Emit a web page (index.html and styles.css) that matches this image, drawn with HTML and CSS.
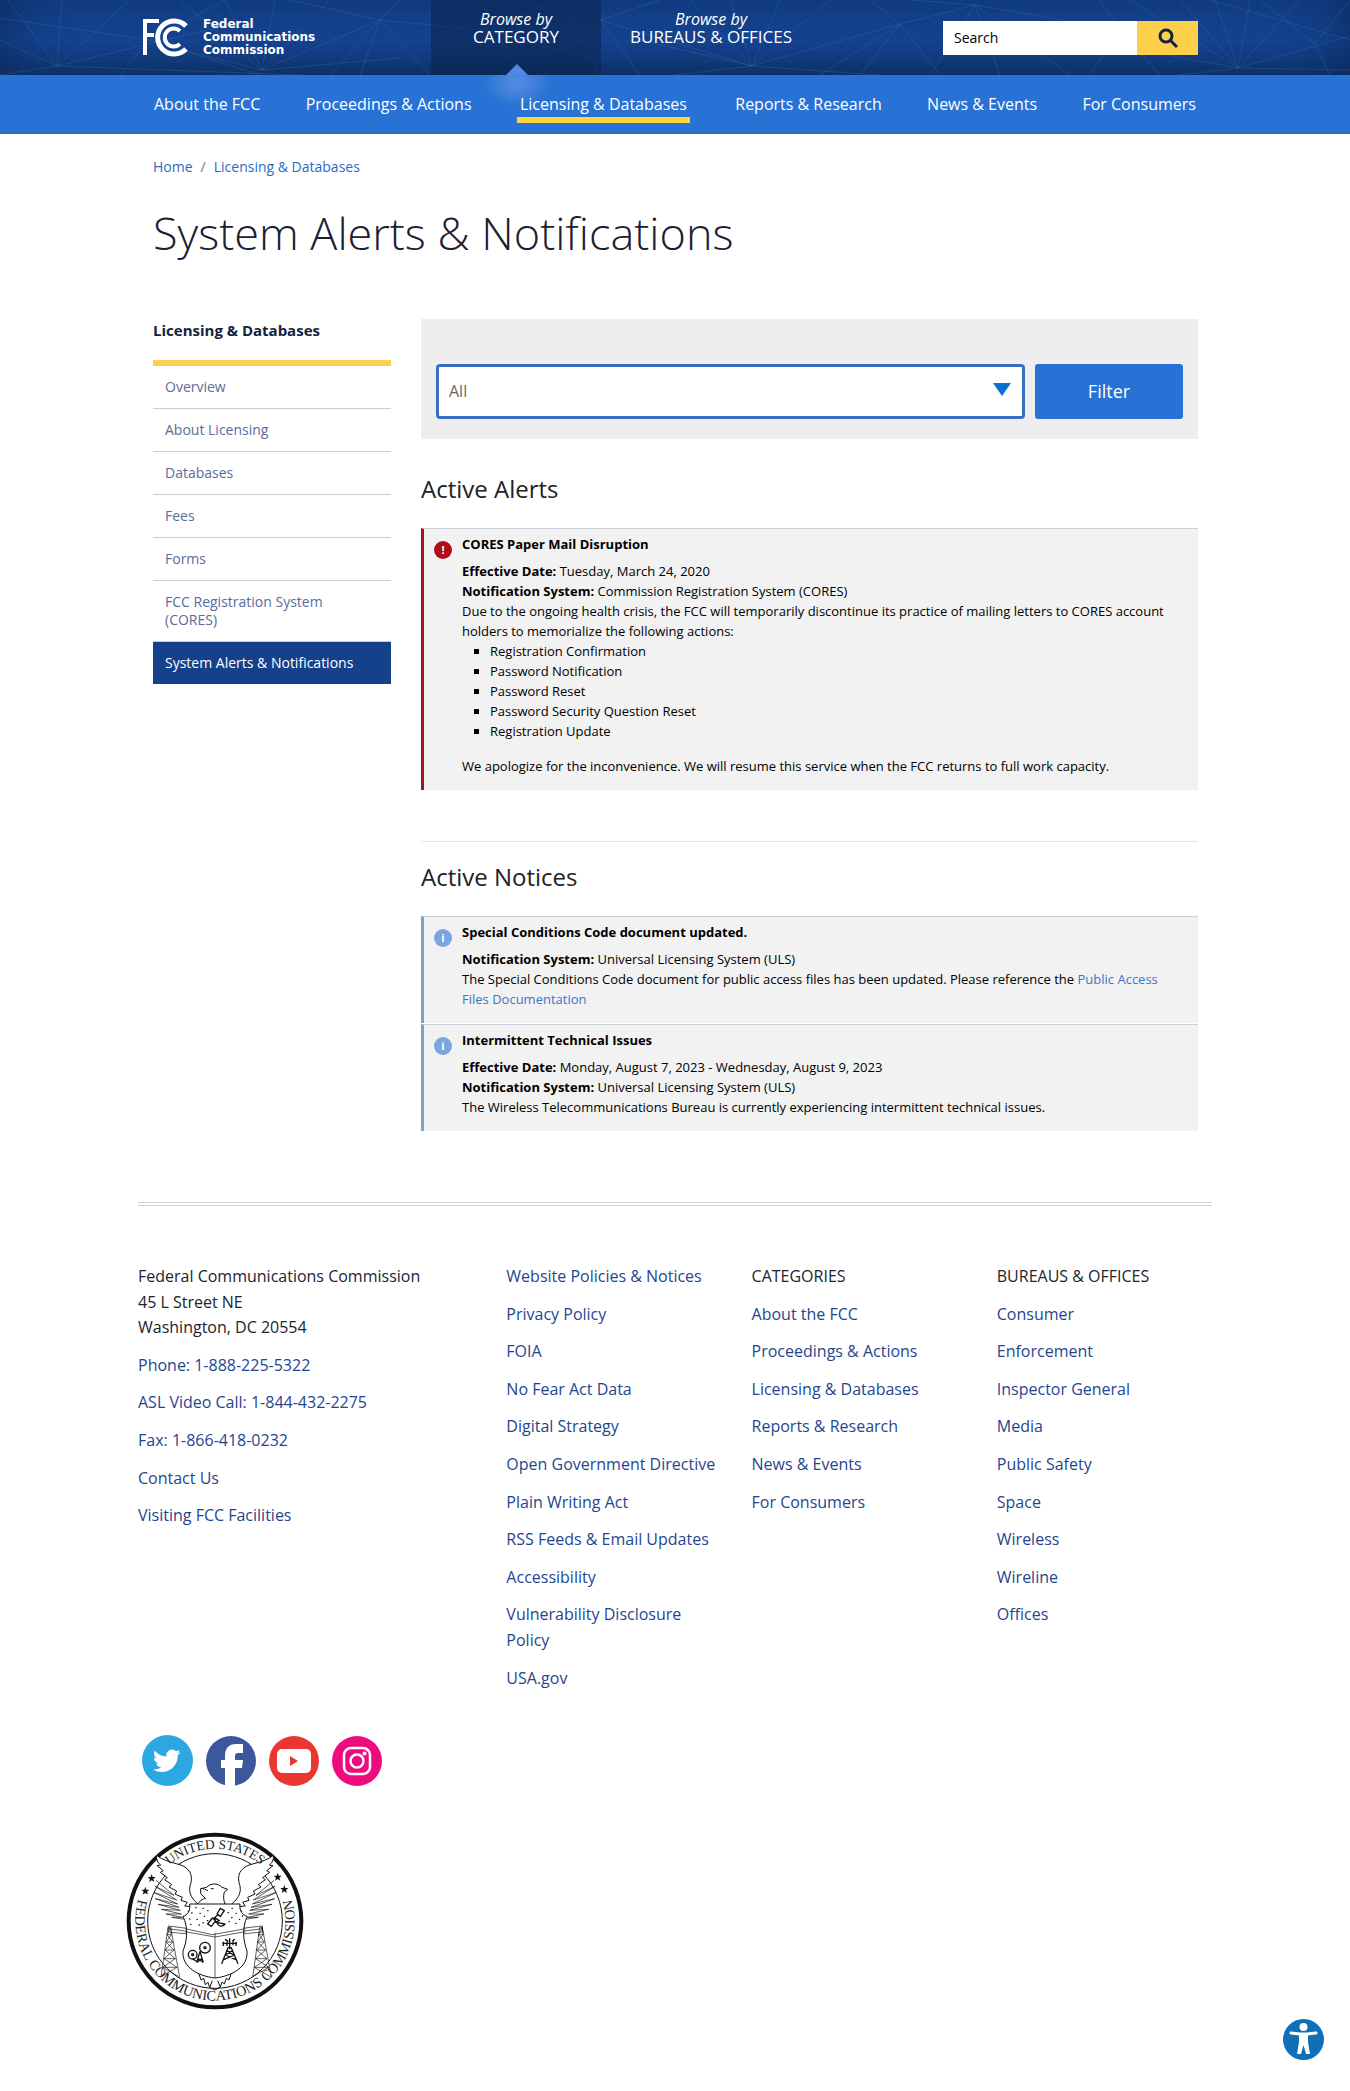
FILE: index.html
```html
<!DOCTYPE html>
<html lang="en">
<head>
<meta charset="utf-8">
<meta name="viewport" content="width=device-width, initial-scale=1">
<title>System Alerts &amp; Notifications | Federal Communications Commission</title>
<link rel="stylesheet" href="styles.css">
</head>
<body>
<header class="masthead">
  <svg class="rays" viewBox="0 0 1350 75" preserveAspectRatio="xMidYMid slice" aria-hidden="true">
    <g fill="none" stroke="#5c8fc8" stroke-opacity=".2" stroke-width="1">
      <path d="M57 66L0 40M57 66L8 0M57 66L62 0M57 66L130 0M57 66L240 22M57 66L300 75M57 66L0 75M0 18L150 40L225 0M150 40L120 75M150 40L260 75M262 70L180 0M262 70L225 0M262 70L275 0M262 70L330 0M262 70L380 20M262 70L190 52M262 70L400 58M380 20L330 75M380 20L360 75M380 20L430 75M380 20L480 30M380 20L400 0M380 20L290 0"/>
      <path d="M480 0L520 75M480 30L560 0M480 30L600 60M560 0L600 75M600 20L640 75M600 20L660 0M600 20L752 66"/>
      <path d="M752 66L690 0M752 66L730 0M752 66L780 0M752 66L830 0M752 66L900 24M752 66L880 75M752 66L640 40M752 66L675 75M900 24L820 75M900 24L860 75M900 24L940 75M900 24L975 5M900 24L870 0M975 5L930 75M975 5L1000 75M975 5L1070 75M975 5L1120 30M975 5L910 0"/>
      <path d="M1238 68L1130 0M1238 68L1180 0M1238 68L1215 0M1238 68L1250 0M1238 68L1300 0M1238 68L1350 36M1238 68L1350 70M1238 68L1140 50M1238 68L1180 75M1315 44L1260 0M1315 44L1350 0M1315 44L1330 75M1210 0L1350 40M1120 30L1090 75M1120 30L1160 75M1120 30L1100 0"/>
    </g>
  </svg>
  <div class="container masthead-row">
    <a class="logo" href="#">
      <svg width="46" height="39" viewBox="0 0 46 39" aria-hidden="true">
        <g fill="none" stroke="#fff" stroke-width="4">
          <path d="M2 37V3H16M2 17H11"/>
          <path stroke-width="5" d="M43 8A16.500 16.500 0 1 0 43 31"/>
          <path d="M37 13A9 9 0 1 0 37 26"/>
        </g>
      </svg>
      <span class="logo-text">Federal<br>Communications<br>Commission</span>
    </a>
    <nav class="browse" aria-label="Browse">
      <a class="browse-tab browse-tab-active" href="#"><em>Browse by</em><span>CATEGORY</span></a>
      <a class="browse-tab browse-tab-wide" href="#"><em>Browse by</em><span>BUREAUS &amp; OFFICES</span></a>
    </nav>
    <form class="search">
      <input type="search" class="search-input" placeholder="Search" aria-label="Search">
      <button type="button" class="search-button" aria-label="Submit search">
        <svg width="20" height="20" viewBox="0 0 20 20" fill="none" stroke="#14233c" stroke-width="3" aria-hidden="true"><circle cx="8" cy="8" r="6"/><path d="M12 12L19 19"/></svg>
      </button>
    </form>
  </div>
</header>
<nav class="mainnav" aria-label="Main">
  <ul class="container mainnav-list">
    <li><a href="#">About the FCC</a></li>
    <li><a href="#">Proceedings &amp; Actions</a></li>
    <li class="current"><a href="#">Licensing &amp; Databases</a></li>
    <li><a href="#">Reports &amp; Research</a></li>
    <li><a href="#">News &amp; Events</a></li>
    <li><a href="#">For Consumers</a></li>
  </ul>
</nav>
<main class="container page">
  <nav class="breadcrumb" aria-label="Breadcrumb"><a href="#">Home</a><span>/</span><a href="#">Licensing &amp; Databases</a></nav>
  <h1>System Alerts &amp; Notifications</h1>
  <div class="columns">
    <aside class="sidebar">
      <h2 class="sidebar-title">Licensing &amp; Databases</h2>
      <ul class="sidebar-list">
        <li><a href="#">Overview</a></li>
        <li><a href="#">About Licensing</a></li>
        <li><a href="#">Databases</a></li>
        <li><a href="#">Fees</a></li>
        <li><a href="#">Forms</a></li>
        <li><a href="#">FCC Registration System (CORES)</a></li>
        <li><a class="selected" href="#">System Alerts &amp; Notifications</a></li>
      </ul>
    </aside>
    <div class="content">
      <form class="filter">
        <div class="filter-select">
          <select aria-label="Notification system"><option>All</option></select>
        </div>
        <button type="button" class="filter-button">Filter</button>
      </form>
      <section>
        <h2 class="section-title">Active Alerts</h2>
        <article class="notice notice-alert">
          <span class="notice-icon">!</span>
          <div>
            <h3>CORES Paper Mail Disruption</h3>
            <p><b>Effective Date:</b> Tuesday, March 24, 2020</p>
            <p><b>Notification System:</b> Commission Registration System (CORES)</p>
            <p>Due to the ongoing health crisis, the FCC will temporarily discontinue its practice of mailing letters to CORES account holders to memorialize the following actions:</p>
            <ul>
              <li>Registration Confirmation</li>
              <li>Password Notification</li>
              <li>Password Reset</li>
              <li>Password Security Question Reset</li>
              <li>Registration Update</li>
            </ul>
            <p>We apologize for the inconvenience. We will resume this service when the FCC returns to full work capacity.</p>
          </div>
        </article>
      </section>
      <hr>
      <section class="notices">
        <h2 class="section-title">Active Notices</h2>
        <article class="notice">
          <span class="notice-icon">i</span>
          <div>
            <h3>Special Conditions Code document updated.</h3>
            <p><b>Notification System:</b> Universal Licensing System (ULS)</p>
            <p>The Special Conditions Code document for public access files has been updated. Please reference the <a href="#">Public Access Files Documentation</a></p>
          </div>
        </article>
        <article class="notice">
          <span class="notice-icon">i</span>
          <div>
            <h3>Intermittent Technical Issues</h3>
            <p><b>Effective Date:</b> Monday, August 7, 2023 - Wednesday, August 9, 2023</p>
            <p><b>Notification System:</b> Universal Licensing System (ULS)</p>
            <p>The Wireless Telecommunications Bureau is currently experiencing intermittent technical issues.</p>
          </div>
        </article>
      </section>
    </div>
  </div>
</main>
<footer class="container footer">
  <div class="footer-grid">
    <ul>
      <li>Federal Communications Commission<br>45 L Street NE<br>Washington, DC 20554</li>
      <li><a href="#">Phone: 1-888-225-5322</a></li>
      <li><a href="#">ASL Video Call: 1-844-432-2275</a></li>
      <li><a href="#">Fax: 1-866-418-0232</a></li>
      <li><a href="#">Contact Us</a></li>
      <li><a href="#">Visiting FCC Facilities</a></li>
    </ul>
    <ul>
      <li><a href="#">Website Policies &amp; Notices</a></li>
      <li><a href="#">Privacy Policy</a></li>
      <li><a href="#">FOIA</a></li>
      <li><a href="#">No Fear Act Data</a></li>
      <li><a href="#">Digital Strategy</a></li>
      <li><a href="#">Open Government Directive</a></li>
      <li><a href="#">Plain Writing Act</a></li>
      <li><a href="#">RSS Feeds &amp; Email Updates</a></li>
      <li><a href="#">Accessibility</a></li>
      <li><a href="#">Vulnerability Disclosure Policy</a></li>
      <li><a href="#">USA.gov</a></li>
    </ul>
    <ul>
      <li>CATEGORIES</li>
      <li><a href="#">About the FCC</a></li>
      <li><a href="#">Proceedings &amp; Actions</a></li>
      <li><a href="#">Licensing &amp; Databases</a></li>
      <li><a href="#">Reports &amp; Research</a></li>
      <li><a href="#">News &amp; Events</a></li>
      <li><a href="#">For Consumers</a></li>
    </ul>
    <ul>
      <li>BUREAUS &amp; OFFICES</li>
      <li><a href="#">Consumer</a></li>
      <li><a href="#">Enforcement</a></li>
      <li><a href="#">Inspector General</a></li>
      <li><a href="#">Media</a></li>
      <li><a href="#">Public Safety</a></li>
      <li><a href="#">Space</a></li>
      <li><a href="#">Wireless</a></li>
      <li><a href="#">Wireline</a></li>
      <li><a href="#">Offices</a></li>
    </ul>
  </div>
  <div class="social">
    <a href="#" aria-label="Twitter"><svg width="51" height="51" viewBox="0 0 51 51"><circle cx="25.500" cy="25.500" r="25.500" fill="#2ca7df"/><path transform="translate(11 12) scale(1.150)" fill="#fff" d="M23.950 4.570a10 10 0 0 1-2.820.770 4.960 4.960 0 0 0 2.160-2.720c-.950.550-2 .950-3.130 1.180a4.920 4.920 0 0 0-8.380 4.480C7.690 8.090 4.070 6.130 1.640 3.160a4.820 4.820 0 0 0-.670 2.480c0 1.710.870 3.210 2.190 4.100a4.900 4.900 0 0 1-2.230-.610v.060a4.920 4.920 0 0 0 3.950 4.830 5 5 0 0 1-2.210.080 4.940 4.940 0 0 0 4.600 3.420A9.870 9.870 0 0 1 0 19.540a14 14 0 0 0 7.550 2.210c9.050 0 14-7.500 14-13.980 0-.210 0-.420-.020-.630a9.940 9.940 0 0 0 2.460-2.550z"/></svg></a>
    <a href="#" aria-label="Facebook"><svg width="50" height="50" viewBox="0 0 50 50"><circle cx="25" cy="25" r="25" fill="#3a589b"/><path fill="#fff" d="M19 50V32H15V24H19V20C19 12 23 8 30 8H37V17H32C30 17 29 18 29 20V24H37L36 32H29V50Z"/></svg></a>
    <a href="#" aria-label="YouTube"><svg width="50" height="50" viewBox="0 0 50 50"><circle cx="25" cy="25" r="25" fill="#ea3530"/><rect x="8" y="13" width="34" height="24" rx="5" fill="#fff"/><path fill="#ea3530" d="M21 20V30L29 25Z"/></svg></a>
    <a href="#" aria-label="Instagram"><svg width="50" height="50" viewBox="0 0 50 50"><circle cx="25" cy="25" r="25" fill="#ed0b7d"/><g fill="none" stroke="#fff" stroke-width="2.500"><rect x="12" y="12" width="26" height="26" rx="7"/><circle cx="25" cy="25" r="6.500"/></g><circle cx="32.500" cy="17.500" r="2" fill="#fff"/></svg></a>
  </div>
  <svg class="seal" width="178" height="178" viewBox="31 38 534 534" role="img" aria-label="Seal of the Federal Communications Commission">
    <defs>
      <path id="arc-top" d="M81 305A217 217 0 0 1 515 305"/>
      <path id="arc-bottom" d="M94 180A239 239 0 1 0 502 180"/>
      <g id="tower"><path d="M-4 0L-25 150M4 0L31 150M-4 0H4L-7 22L10 44L-13 68L18 94L-20 120L28 148M4 0L6 22L-10 44L14 68L-16 94L23 120L-24 148M-7 22H6M-10 44H10M-13 68H14M-16 94H18M-20 120H23"/></g>
    </defs>
    <g fill="none" stroke="#111" stroke-linejoin="round">
      <circle cx="298" cy="305" r="259" stroke-width="12" fill="#fff"/>
      <circle cx="298" cy="305" r="202" stroke-width="3"/>
      <g stroke-width="3" fill="#fff">
        <path d="M245 252C225 236 216 215 226 190C233 157 212 140 182 133C160 128 138 120 122 108C122 122 126 130 135 137L124 139L143 154L134 159L155 175L147 181L168 196L160 203L183 215L178 224L200 234L196 243L215 249L207 260L228 262L217 278L238 274L226 295L245 280Z"/>
        <path d="M350 252C370 236 380 215 370 190C363 157 384 140 414 133C436 128 458 120 474 108C474 122 470 130 461 137L472 139L453 154L462 159L441 175L449 181L428 196L436 203L413 215L418 224L396 234L400 243L381 249L389 260L368 262L379 278L358 274L370 295L350 280Z"/>
      </g>
      <g stroke-width="2">
        <path d="M121 183L175 228L118 201L183 242L116 220L186 254L119 238L190 264L127 255L194 273L137 270L197 284L151 284L200 294L168 294L208 300"/>
        <path d="M475 183L421 228L478 201L413 242L480 220L410 254L477 238L406 264L469 255L402 273L459 270L399 284L445 284L396 294L428 294L388 300"/>
        <path d="M158 320L292 337L440 320M157 328L292 347L441 328M158 338L298 352L440 338M158 320V338M440 320V338"/>
        <use href="#tower" x="161" y="324"/>
        <use href="#tower" x="436" y="324"/>
      </g>
      <path d="M245 254C256 242 263 237 270 238L255 223V208L273 204C284 191 306 190 319 204L336 210L326 218C322 232 324 243 328 254M255 208C263 205 270 213 277 214M285 208H294" stroke-width="3"/>
      <path d="M222 254H373C370 275 381 287 395 291C378 325 383 365 394 395C398 443 350 470 298 476C246 470 198 443 202 395C214 365 219 325 202 291C216 287 225 275 222 254Z" fill="#fff" stroke-width="3"/>
      <path d="M208 328L290 346L390 328M208 337L298 353L389 337M298 340V476" stroke-width="2"/>
      <path d="M250 464L256 482L264 477L269 496L277 489L282 505L298 512L314 503L319 488L326 494L332 477L340 482L346 464M282 505L290 484M314 503L306 484" stroke-width="3"/>
      <path d="M240 265h1M262 267h1M349 267h1M228 281h1M253 282h1M276 274h1M337 280h1M361 282h1M222 299h1M244 300h1M266 291h1M348 295h1M371 300h1M225 315h1M250 317h1M275 304h1M340 307h1M360 312h1M262 310h1M380 290h1" stroke-width="4" stroke-linecap="round"/>
      <path d="M276 314L290 296L300 304L287 321ZM304 284L314 267L326 274L314 291ZM292 299L309 285M296 295L311 304L300 309ZM304 310C308 323 321 323 328 314Z" stroke-width="4"/>
      <g stroke-width="4">
        <circle cx="231" cy="406" r="13"/><circle cx="268" cy="385" r="16"/><circle cx="268" cy="385" r="3"/><circle cx="231" cy="406" r="3"/>
        <path d="M243 429L253 397L263 429M246 417L263 429M260 417L243 429M231 418L242 426"/>
        <path d="M342 357V390M318 433L337 385H347L367 433M324 421L357 407M360 421L329 407M334 394L354 407M350 394L330 407M320 372H364M323 367V380M334 367V380M352 364V378M361 367V380M328 360L338 366M350 366L357 359"/>
      </g>
    </g>
    <g class="seal-text">
      <text font-size="40"><textPath href="#arc-top" startOffset="50%" text-anchor="middle">UNITED STATES</textPath></text>
      <text font-size="43"><textPath href="#arc-bottom" startOffset="50%" text-anchor="middle">FEDERAL COMMUNICATIONS COMMISSION</textPath></text>
    </g>
    <g fill="#111">
      <path id="star" d="M108 164L111 173L120 173L113 179L116 188L108 183L100 188L103 179L96 173L105 173Z"/>
      <use href="#star" x="-19" y="38"/><use href="#star" x="378" y="-4"/><use href="#star" x="398" y="33"/>
    </g>
  </svg>
</footer>
<button type="button" class="a11y" aria-label="Accessibility options">
  <svg width="41" height="41" viewBox="0 0 41 41" aria-hidden="true"><circle cx="20.500" cy="20.500" r="20.500" fill="#1170b5"/><circle cx="20.500" cy="8" r="4" fill="#fff"/><path d="M8 14L17 15H24L33 14" fill="none" stroke="#fff" stroke-width="3" stroke-linecap="round"/><path d="M16 15H25V23L27 35H23L20.500 26L18 35H14L16 23Z" fill="#fff"/></svg>
</button>
</body>
</html>
```

FILE: styles.css
```css
* { box-sizing: border-box; }

body {
  margin: 0;
  background: #fff;
  color: #212430;
  font: 16px/1.6 "Open Sans", "Noto Sans", sans-serif;
}

a { color: #2b69c4; text-decoration: none; }
ul { margin: 0; padding: 0; list-style: none; }
h1, h2, h3, p { margin: 0; }
button, input, select { font: inherit; }
svg { display: block; }

.container {
  width: 100%;
  max-width: 1074px;
  margin: 0 auto;
}

/* Masthead */
.masthead {
  position: relative;
  background: linear-gradient(#123d82, #14428f 55%, #103269);
  box-shadow: inset 60px 0 60px -60px #0c2a5c, inset -60px 0 60px -60px #0c2a5c;
}
.rays {
  position: absolute;
  inset: 0;
  width: 100%;
  height: 100%;
}
.masthead-row {
  position: relative;
  display: flex;
  align-items: stretch;
  height: 75px;
  padding-right: 14px;
}
.logo {
  display: flex;
  align-items: center;
  gap: 14px;
  width: 293px;
  padding-left: 5px;
  color: #fff;
}
.logo-text { font: bold 12px/13px "DejaVu Sans", sans-serif; }
.browse { display: flex; }
.browse-tab {
  position: relative;
  display: flex;
  flex-direction: column;
  align-items: center;
  width: 170px;
  padding-top: 10px;
  color: #fff;
  font-size: 17px;
  line-height: 18px;
}
.browse-tab em { font-size: 16px; }
.browse-tab-wide { width: 220px; }
.browse-tab-active { background: rgba(8, 32, 72, .5); }
.browse-tab-active::after {
  content: "";
  position: absolute;
  bottom: 0;
  left: 50%;
  margin-left: -10px;
  border: 11px solid transparent;
  border-top-width: 0;
  border-bottom-color: #5089df;
}
.search {
  display: flex;
  align-self: center;
  width: 255px;
  height: 34px;
  margin-left: auto;
}
.search-input {
  flex: 1;
  min-width: 0;
  padding: 2px 11px 0;
  border: 0;
  border-radius: 0;
  background: #fff;
  color: #000;
  font-size: 14px;
}
.search-input::placeholder { color: #000; opacity: 1; }
.search-button {
  display: flex;
  align-items: center;
  justify-content: center;
  width: 61px;
  padding: 0;
  border: 0;
  background: #fdd04b;
}

/* Main navigation */
.mainnav {
  border-bottom: 2px solid #2f6bc2;
  background: radial-gradient(ellipse 34px 24px at calc(50% - 158px) 8px, #5089df 20%, transparent), #2772d4;
}
.mainnav-list {
  display: flex;
  justify-content: space-between;
  padding: 17px 16px 11px;
}
.mainnav-list a {
  display: block;
  padding-bottom: 5px;
  color: #fff;
  line-height: 24px;
}
.mainnav-list .current {
  height: 31px;
  margin-bottom: -2px;
  padding: 0 3px;
  border-bottom: 6px solid #fdd43b;
}

/* Page */
.page { padding: 23px 14px 71px 15px; }
.breadcrumb {
  display: flex;
  gap: 8px;
  font-size: 14px;
  line-height: 20px;
  color: #6b7280;
}
h1 {
  margin: 28px 0 58px;
  color: #1c2030;
  font-size: 45px;
  font-weight: 300;
  line-height: 56px;
}
.columns {
  display: grid;
  grid-template-columns: 238px minmax(0, 1fr);
  gap: 30px;
}
.sidebar-title {
  padding-bottom: 19px;
  border-bottom: 6px solid #fbd04f;
  color: #14233c;
  font-size: 15px;
  font-weight: 700;
  line-height: 22px;
}
.sidebar-list li { border-bottom: 1px solid #ccc; }
.sidebar-list li:last-child { border-bottom: 0; }
.sidebar-list a {
  display: block;
  padding: 12px 28px 12px 12px;
  color: #5a6c9b;
  font-size: 14px;
  line-height: 18px;
}
.sidebar-list .selected { background: #15418a; color: #fff; }

.filter {
  display: flex;
  gap: 10px;
  padding: 45px 15px 20px;
  background: #eee;
}
.filter-select { position: relative; flex: 1; }
.filter-select::after {
  content: "";
  position: absolute;
  top: 19px;
  right: 14px;
  border: 9px solid transparent;
  border-top: 13px solid #0a71ce;
  border-bottom: 0;
  pointer-events: none;
}
.filter-select select {
  display: block;
  width: 100%;
  height: 55px;
  padding: 0 10px;
  border: 3px solid #3470bd;
  border-radius: 4px;
  appearance: none;
  background: #fff;
  color: #666;
}
.filter-button {
  width: 148px;
  height: 55px;
  border: 0;
  border-radius: 3px;
  background: #2772d4;
  color: #fff;
  font-size: 18px;
}

.section-title {
  margin: 34px 0 23px;
  color: #222;
  font-size: 24px;
  font-weight: 400;
  line-height: 32px;
}
hr {
  margin: 51px 0 0;
  border: 0;
  border-top: 1px solid #e5e5e5;
}
.notices .section-title { margin-top: 19px; }
.notice {
  display: flex;
  gap: 10px;
  padding: 5px 30px 14px 10px;
  border-top: 1px solid #ccd2d8;
  border-left: 3px solid #7f9fd0;
  background: #f2f2f2;
  color: #000;
  font-size: 13px;
  line-height: 20px;
}
.notice + .notice { margin-top: 1px; }
.notice-alert { border-left-color: #a81228; }
.notice-icon {
  flex: none;
  width: 18px;
  height: 18px;
  margin-top: 7px;
  border-radius: 50%;
  background: #7aa5e0;
  color: #fff;
  font-size: 11px;
  font-weight: 700;
  line-height: 17px;
  text-align: center;
}
.notice-alert .notice-icon { background: #b00d18; }
.notice h3 { margin-bottom: 7px; font-size: 13px; font-weight: 700; }
.notice a { color: #3a74cc; }
.notice ul {
  margin-bottom: 15px;
  padding-left: 28px;
  list-style: square;
}

/* Footer */
.footer {
  padding: 58px 0 81px;
  border-top: 4px double #d0d0d0;
}
.footer-grid {
  display: grid;
  grid-template-columns: 338fr 215fr 215fr 215fr;
  gap: 30px;
}
.footer-grid ul {
  display: flex;
  flex-direction: column;
  gap: 12px;
}
.footer-grid a { color: #1f468f; }
.social {
  display: flex;
  align-items: center;
  gap: 13px;
  margin: 44px 0 46px 4px;
}
.seal { margin-left: -12px; }
.seal-text {
  fill: #222;
  font-family: "Liberation Serif", serif;
}
.a11y {
  position: fixed;
  right: 26px;
  bottom: 31px;
  padding: 0;
  border: 0;
  background: none;
}
```
